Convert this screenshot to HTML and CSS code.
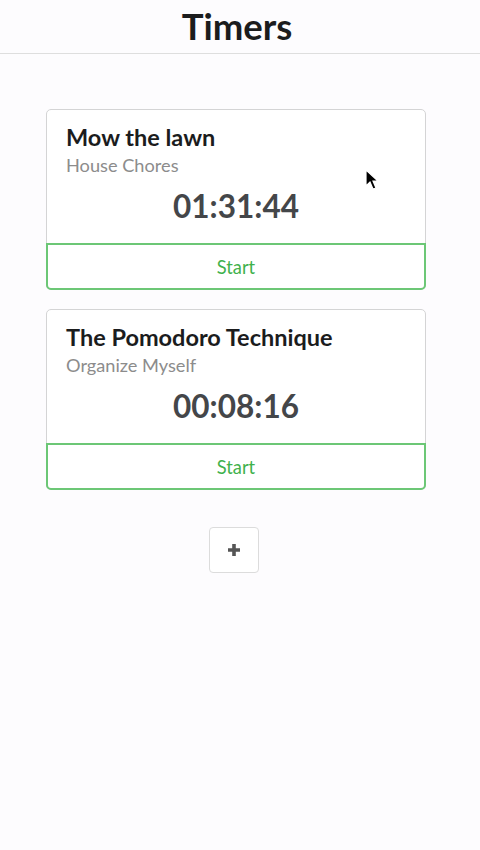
FILE: index.html
```html
<!DOCTYPE html>
<html>
<head>
<meta charset="utf-8">
<link rel="stylesheet" href="styles.css">
</head>
<body>
<header class="topbar"><h1 class="title">Timers</h1></header>
<main class="list">
  <div class="card">
    <div class="content">
      <div class="name">Mow the lawn</div>
      <div class="project">House Chores</div>
      <div class="elapsed">01:31:44</div>
    </div>
    <button class="start">Start</button>
  </div>
  <div class="card">
    <div class="content">
      <div class="name">The Pomodoro Technique</div>
      <div class="project">Organize Myself</div>
      <div class="elapsed">00:08:16</div>
    </div>
    <button class="start">Start</button>
  </div>
  <div class="add-row"><button class="add" aria-label="Add"><svg width="14" height="14" viewBox="0 0 14 14"><path d="M7 1 V13 M1 7 H13" stroke="#555" stroke-width="3.6"/></svg></button></div>
</main>
<svg class="cursor" width="16" height="24" viewBox="0 0 16 24"><path d="M1 1 L1 17 L5 13 L8 20 L11 19 L8 12 L13 12 Z" fill="#000" stroke="#fff" stroke-width="1.2"/></svg>
</body>
</html>
```
FILE: styles.css
```css
html, body { margin: 0; padding: 0; }
body {
  background: #fdfcfe;
  font-family: Lato, "Open Sans", sans-serif;
  color: #1b1c1d;
  width: 480px;
  height: 850px;
  position: relative;
  overflow: hidden;
}
.topbar {
  height: 53px;
  border-bottom: 1px solid #dedede;
  display: flex;
  align-items: center;
  justify-content: center;
  padding-right: 6px;
  box-sizing: content-box;
}
.title { margin: 0; font-size: 36.5px; font-weight: 700; line-height: 1; color: #1b1c1d; }
.list {
  width: 380px;
  margin: 55px 0 0 46px;
  display: flex;
  flex-direction: column;
  gap: 19px;
}
.card {
  background: #fff;
  border: 1px solid #d4d4d5;
  border-radius: 5px;
  display: flex;
  flex-direction: column;
}
.content { padding: 13px 19px 17px; }
.name { font-size: 23.5px; font-weight: 700; line-height: 28px; color: #1b1c1d; }
.project { font-size: 18.2px; color: #8c8c8c; line-height: 24px; margin-top: 2px; }
.elapsed {
  text-align: center;
  font-size: 31.5px;
  font-weight: 700;
  color: #444649;
  line-height: 40px;
  margin-top: 9px;
}
.start {
  height: 47px;
  margin: 0 -1px -1px;
  border: 2px solid #6cc776;
  border-radius: 0 0 5px 5px;
  background: #fff;
  color: #3fb14c;
  font-family: inherit;
  font-size: 18.3px;
  font-weight: 400;
  padding: 0;
}
.add-row { display: flex; justify-content: center; margin-top: 18px; padding-right: 4px; }
.add {
  width: 50px;
  height: 46px;
  background: #fff;
  border: 1px solid #dcdcdc;
  border-radius: 4px;
  display: flex;
  align-items: center;
  justify-content: center;
  padding: 0;
}
.add svg { display: block; }
.cursor { position: absolute; left: 365px; top: 169px; }
```
